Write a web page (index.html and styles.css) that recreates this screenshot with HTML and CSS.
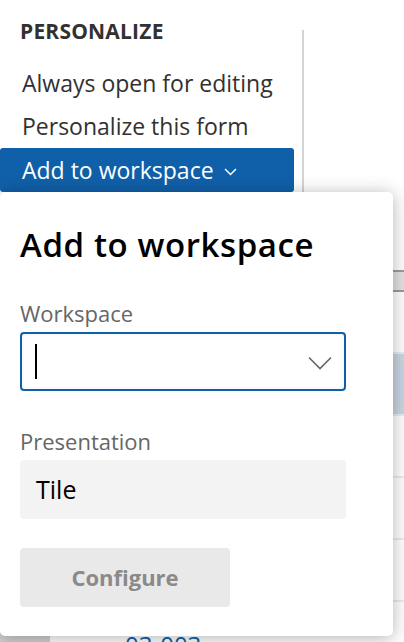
FILE: index.html
```html
<!DOCTYPE html>
<html lang="en">
<head>
<meta charset="utf-8">
<title>Add to workspace</title>
<link rel="stylesheet" href="styles.css">
</head>
<body>
<div class="top">
  <div class="menu">
    <div class="menu-heading">PERSONALIZE</div>
    <div class="menu-item">Always open for editing</div>
    <div class="menu-item">Personalize this form</div>
    <div class="menu-button">Add to workspace
      <svg class="btn-chev" width="13" height="8" viewBox="0 0 13 8"><path d="M1 1 L6.5 6.5 L12 1" fill="none" stroke="#fff" stroke-width="1.5"/></svg>
    </div>
  </div>
  <div class="divider"></div>
</div>
<div class="grid">
  <div class="grid-head"></div>
  <div class="grid-row"></div>
  <div class="grid-row selected"></div>
  <div class="grid-row"></div>
  <div class="grid-row"></div>
  <div class="grid-row"></div>
  <div class="grid-row last"><div class="cell-check"></div><div class="cell-id">03-003</div></div>
</div>

<div class="popup">
  <h1 class="popup-title">Add to workspace</h1>
  <div class="field-label">Workspace</div>
  <div class="combo">
    <span class="caret"></span>
    <svg class="combo-chev" width="24" height="14" viewBox="0 0 24 14"><path d="M1 1.5 L12 12.5 L23 1.5" fill="none" stroke="#666" stroke-width="1.6"/></svg>
  </div>
  <div class="field-label second">Presentation</div>
  <div class="readonly">Tile</div>
  <div class="configure">Configure</div>
</div>
</body>
</html>
```
FILE: styles.css
```css
html, body {
  margin: 0;
  padding: 0;
}
body {
  width: 404px;
  height: 642px;
  overflow: hidden;
  position: relative;
  background: #fff;
  font-family: "Open Sans", "Noto Sans", sans-serif;
  color: #323130;
}
.top {
  display: flex;
  height: 270px;
}
.menu {
  width: 294px;
  padding-top: 14px;
}
.menu-heading {
  margin-left: 20px;
  font-size: 21px;
  font-weight: 700;
  letter-spacing: 0.2px;
  line-height: 34px;
  color: #323130;
  margin-bottom: 14px;
}
.menu-item {
  padding-left: 22px;
  font-size: 23px;
  line-height: 43px;
  height: 43px;
  color: #323130;
}
.menu-button {
  display: flex;
  align-items: center;
  height: 44px;
  padding-left: 22px;
  background: #1060a9;
  color: #fff;
  font-size: 23px;
  border-radius: 3px;
}
.btn-chev {
  margin-left: 10px;
  margin-top: 3px;
}
.divider {
  width: 2px;
  margin-left: 8px;
  margin-top: 30px;
  background: #d4d4d4;
}
.grid-head {
  height: 18px;
  border-top: 2px solid #9c9c9c;
  border-bottom: 2px solid #9c9c9c;
  background: #e2e2e2;
}
.grid-row {
  height: 60px;
  border-bottom: 2px solid #ececec;
}
.grid-row.selected {
  background: #c8d6e4;
}
.grid-row.last {
  display: flex;
  height: 60px;
}
.cell-check {
  width: 50px;
  background: #d0d0d0;
}
.cell-id {
  margin-left: 75px;
  padding-top: 28px;
  font-size: 24px;
  line-height: 30px;
  color: #1060a9;
}
.popup {
  position: absolute;
  left: 0;
  top: 192px;
  width: 393px;
  height: 444px;
  box-sizing: border-box;
  padding: 33px 20px 0 20px;
  background: #fff;
  border-radius: 5px;
  box-shadow: 0 2px 18px rgba(0, 0, 0, 0.3);
}
.popup-title {
  margin: 0;
  font-size: 33px;
  font-weight: 600;
  letter-spacing: 0.6px;
  line-height: 40px;
  color: #000;
}
.field-label {
  margin-top: 34px;
  font-size: 22px;
  line-height: 28px;
  color: #666;
}
.field-label.second {
  margin-top: 36px;
}
.combo {
  margin-top: 5px;
  width: 326px;
  height: 59px;
  box-sizing: border-box;
  border: 2px solid #1060a9;
  border-radius: 4px;
  display: flex;
  align-items: center;
  justify-content: space-between;
  padding: 0 12px 0 13px;
  box-shadow: inset 0 0 4px rgba(0, 0, 0, 0.06);
}
.caret {
  width: 2px;
  height: 35px;
  background: #000;
}
.combo-chev {
  margin-top: 2px;
}
.readonly {
  margin-top: 5px;
  width: 326px;
  height: 59px;
  box-sizing: border-box;
  padding-left: 16px;
  background: #f3f3f3;
  border-radius: 4px;
  font-size: 25px;
  line-height: 59px;
  color: #000;
}
.configure {
  margin-top: 29px;
  width: 210px;
  height: 59px;
  background: #e9e9e9;
  border-radius: 4px;
  text-align: center;
  font-size: 22px;
  font-weight: 700;
  line-height: 59px;
  color: #8a8a8a;
}
```
